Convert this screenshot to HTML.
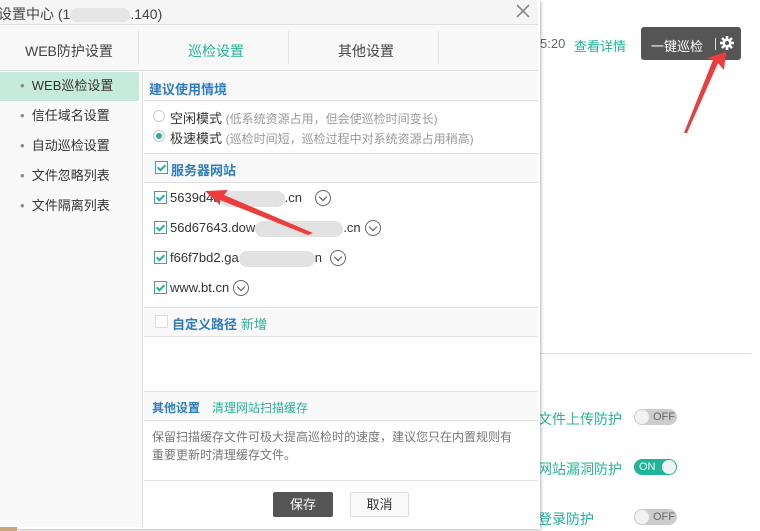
<!DOCTYPE html>
<html><head><meta charset="utf-8"><style>
*{margin:0;padding:0;box-sizing:border-box}
body{width:760px;height:531px;overflow:hidden;background:#fff;position:relative;font-family:"Liberation Sans","Noto Sans CJK SC",sans-serif;font-size:12px;color:#333}
.a{position:absolute;white-space:nowrap}
.g{color:#20b597}
.b{color:#2b7cc0;font-weight:bold}
.cb{position:absolute;width:13px;height:13px;border:1px solid #20b597;background:#fff}
.cb:after{content:"";position:absolute;left:3px;top:1px;width:3px;height:6px;border:solid #20b597;border-width:0 2px 2px 0;transform:rotate(45deg)}
.dd{position:absolute;width:16px;height:16px;border:1px solid #666;border-radius:50%}
.dd:after{content:"";position:absolute;left:4px;top:3px;width:5px;height:5px;border:solid #555;border-width:0 1.5px 1.5px 0;transform:rotate(45deg)}
.hl{position:absolute;height:1px;background:#e0e0e0}
.tg{position:absolute;width:43px;height:16px;border-radius:8px;font-size:11px;line-height:16px}
.knob{position:absolute;top:1px;width:14px;height:14px;border-radius:50%;background:#f2f2f2}
</style></head><body>
<!-- background right -->
<div class="a" style="left:540px;top:36px;font-size:13px;color:#666">5:20</div>
<div class="a g" style="left:574px;top:36px;font-size:13px">查看详情</div>
<div class="a" style="left:641px;top:27px;width:100px;height:33px;background:#555;border-radius:3px"></div>
<div class="a" style="left:651px;top:36px;color:#fff;font-size:13px">一键巡检</div>
<div class="a" style="left:715px;top:38px;width:1px;height:12px;background:#ddd"></div>
<svg class="a" style="left:719px;top:35px" width="16" height="16" viewBox="0 0 16 16"><g stroke="#fff" stroke-width="2.6"><line x1="8" y1="1" x2="8" y2="15"/><line x1="1" y1="8" x2="15" y2="8"/><line x1="3" y1="3" x2="13" y2="13"/><line x1="13" y1="3" x2="3" y2="13"/></g><circle cx="8" cy="8" r="4.5" fill="#fff"/><circle cx="8" cy="8" r="2" fill="#555"/></svg>
<div class="hl" style="left:540px;top:353px;width:211px;background:#ddd"></div>
<div class="a g" style="left:538px;top:409px;font-size:14px">文件上传防护</div>
<div class="a g" style="left:538px;top:459px;font-size:14px">网站漏洞防护</div>
<div class="a g" style="left:538px;top:509px;font-size:14px">登录防护</div>
<div class="tg" style="left:634px;top:409px;background:#ccc;color:#666"><span class="knob" style="left:1px"></span><span style="position:absolute;left:19px">OFF</span></div>
<div class="tg" style="left:634px;top:459px;background:#20b597;color:#fff"><span style="position:absolute;left:5px">ON</span><span class="knob" style="right:1px"></span></div>
<div class="tg" style="left:634px;top:509px;background:#ccc;color:#666"><span class="knob" style="left:1px"></span><span style="position:absolute;left:19px">OFF</span></div>
<!-- dialog -->
<div class="a" style="left:0;top:0;width:540px;height:529px;background:#fff;box-shadow:1px 1px 3px rgba(0,0,0,.3)"></div>
<div class="a" style="left:0;top:527px;width:17px;height:4px;background:#c8a878"></div>
<div class="a" style="left:0;top:0;width:538px;height:25px;background:#f5f5f5;border-bottom:1px solid #e0e0e0"></div>
<div class="a" style="left:-2px;top:4px;font-size:14px;color:#444">设置中心 (1<span style="display:inline-block;width:60px;height:14px;background:#e6e6e6;vertical-align:middle;border-radius:7px"></span>.140)</div>
<svg class="a" style="left:516px;top:4px" width="14" height="14"><g stroke="#888" stroke-width="1.6"><line x1="1" y1="1" x2="13" y2="13"/><line x1="13" y1="1" x2="1" y2="13"/></g></svg>
<div class="a" style="left:0;top:25px;width:538px;height:46px;background:#f8f8f8;border-bottom:1px solid #e0e0e0"></div>
<div class="a" style="left:138px;top:31px;width:1px;height:33px;background:#e4e4e4"></div>
<div class="a" style="left:288px;top:31px;width:1px;height:33px;background:#e4e4e4"></div>
<div class="a" style="left:438px;top:31px;width:1px;height:33px;background:#e4e4e4"></div>
<div class="a" style="left:25px;top:41px;font-size:14px;color:#444">WEB防护设置</div>
<div class="a g" style="left:188px;top:41px;font-size:14px">巡检设置</div>
<div class="a" style="left:338px;top:41px;font-size:14px;color:#444">其他设置</div>
<!-- sidebar -->
<div class="a" style="left:0;top:71px;width:143px;height:456px;background:#f9f9f9;border-right:1px solid #e0e0e0"></div>
<div class="a" style="left:0;top:72px;width:139px;height:29px;background:#c6eadb"></div>
<div class="a" style="left:20px;top:78px;font-size:13px;color:#333;line-height:16px">
<div style="height:30px"><span style="color:#888">•</span>&nbsp; WEB巡检设置</div><div style="height:30px"><span style="color:#888">•</span>&nbsp; 信任域名设置</div><div style="height:30px"><span style="color:#888">•</span>&nbsp; 自动巡检设置</div><div style="height:30px"><span style="color:#888">•</span>&nbsp; 文件忽略列表</div><div style="height:30px"><span style="color:#888">•</span>&nbsp; 文件隔离列表</div></div>
<!-- content -->
<div class="a" style="left:144px;top:72px;width:394px;height:29px;background:#f9f9f9;border-bottom:1px solid #e0e0e0"></div>
<div class="a b" style="left:149px;top:79px;font-size:13px">建议使用情境</div>
<div class="a" style="left:153px;top:110px;width:12px;height:12px;border:1px solid #ccc;border-radius:50%"></div>
<div class="a" style="left:153px;top:130px;width:12px;height:12px;border:1px solid #ccc;border-radius:50%"><span style="position:absolute;left:2px;top:2px;width:6px;height:6px;border-radius:50%;background:#20b597"></span></div>
<div class="a" style="left:170px;top:108px;font-size:13px">空闲模式 <span style="color:#999;font-size:12px">(低系统资源占用，但会使巡检时间变长)</span></div>
<div class="a" style="left:170px;top:128px;font-size:13px">极速模式 <span style="color:#999;font-size:12px">(巡检时间短，巡检过程中对系统资源占用稍高)</span></div>
<div class="a" style="left:144px;top:153px;width:394px;height:30px;background:#f9f9f9;border-top:1px solid #e0e0e0;border-bottom:1px solid #e0e0e0"></div>
<div class="cb" style="left:155px;top:161px"></div>
<div class="a b" style="left:171px;top:160px;font-size:13px">服务器网站</div>
<div class="cb" style="left:154px;top:191px"></div><div class="a" style="left:170px;top:190px;font-size:13px">5639d4a<span style="display:inline-block;width:64px;height:16px;background:#e2e2e2;border-radius:8px;vertical-align:middle"></span>.cn</div><div class="dd" style="left:315px;top:190px"></div>
<div class="cb" style="left:154px;top:221px"></div><div class="a" style="left:170px;top:220px;font-size:13px">56d67643.dow<span style="display:inline-block;width:88px;height:16px;background:#e2e2e2;border-radius:8px;vertical-align:middle"></span>.cn</div><div class="dd" style="left:365px;top:220px"></div>
<div class="cb" style="left:154px;top:251px"></div><div class="a" style="left:170px;top:250px;font-size:13px">f66f7bd2.ga<span style="display:inline-block;width:76px;height:16px;background:#e2e2e2;border-radius:8px;vertical-align:middle"></span>n</div><div class="dd" style="left:330px;top:250px"></div>
<div class="cb" style="left:154px;top:281px"></div><div class="a" style="left:170px;top:280px;font-size:13px">www.bt.cn</div><div class="dd" style="left:233px;top:280px"></div>
<div class="a" style="left:144px;top:307px;width:394px;height:30px;background:#f9f9f9;border-top:1px solid #e0e0e0;border-bottom:1px solid #e0e0e0"></div>
<div class="a" style="left:155px;top:315px;width:13px;height:13px;border:1px solid #ddd;background:#fff"></div>
<div class="a b" style="left:172px;top:314px;font-size:13px">自定义路径</div>
<div class="a g" style="left:241px;top:314px;font-size:13px">新增</div>
<div class="a" style="left:144px;top:391px;width:394px;height:30px;background:#f9f9f9;border-top:1px solid #e0e0e0;border-bottom:1px solid #e0e0e0"></div>
<div class="a b" style="left:152px;top:399px;font-size:12px">其他设置</div>
<div class="a g" style="left:212px;top:399px;font-size:12px">清理网站扫描缓存</div>
<div class="a" style="left:152px;top:428px;font-size:12px;color:#777;line-height:18px;white-space:normal;width:370px">保留扫描缓存文件可极大提高巡检时的速度，建议您只在内置规则有重要更新时清理缓存文件。</div>
<div class="hl" style="left:144px;top:480px;width:394px"></div>
<div class="a" style="left:273px;top:492px;width:60px;height:25px;background:#555;border-radius:2px;color:#fff;font-size:13px;text-align:center;line-height:25px">保存</div>
<div class="a" style="left:350px;top:492px;width:59px;height:25px;background:#fafafa;border:1px solid #ddd;border-radius:2px;color:#333;font-size:13px;text-align:center;line-height:23px">取消</div>
<!-- arrows -->
<svg class="a" style="left:0;top:0" width="760" height="531"><g fill="#f03b3b"><polygon points="687,133 684,133 713,60 707,58 726,52 724,70 718,63"/><polygon points="313,233 308,235 220,200 220,205 205,191 228,190 224,195"/></g></svg>
</body></html>
